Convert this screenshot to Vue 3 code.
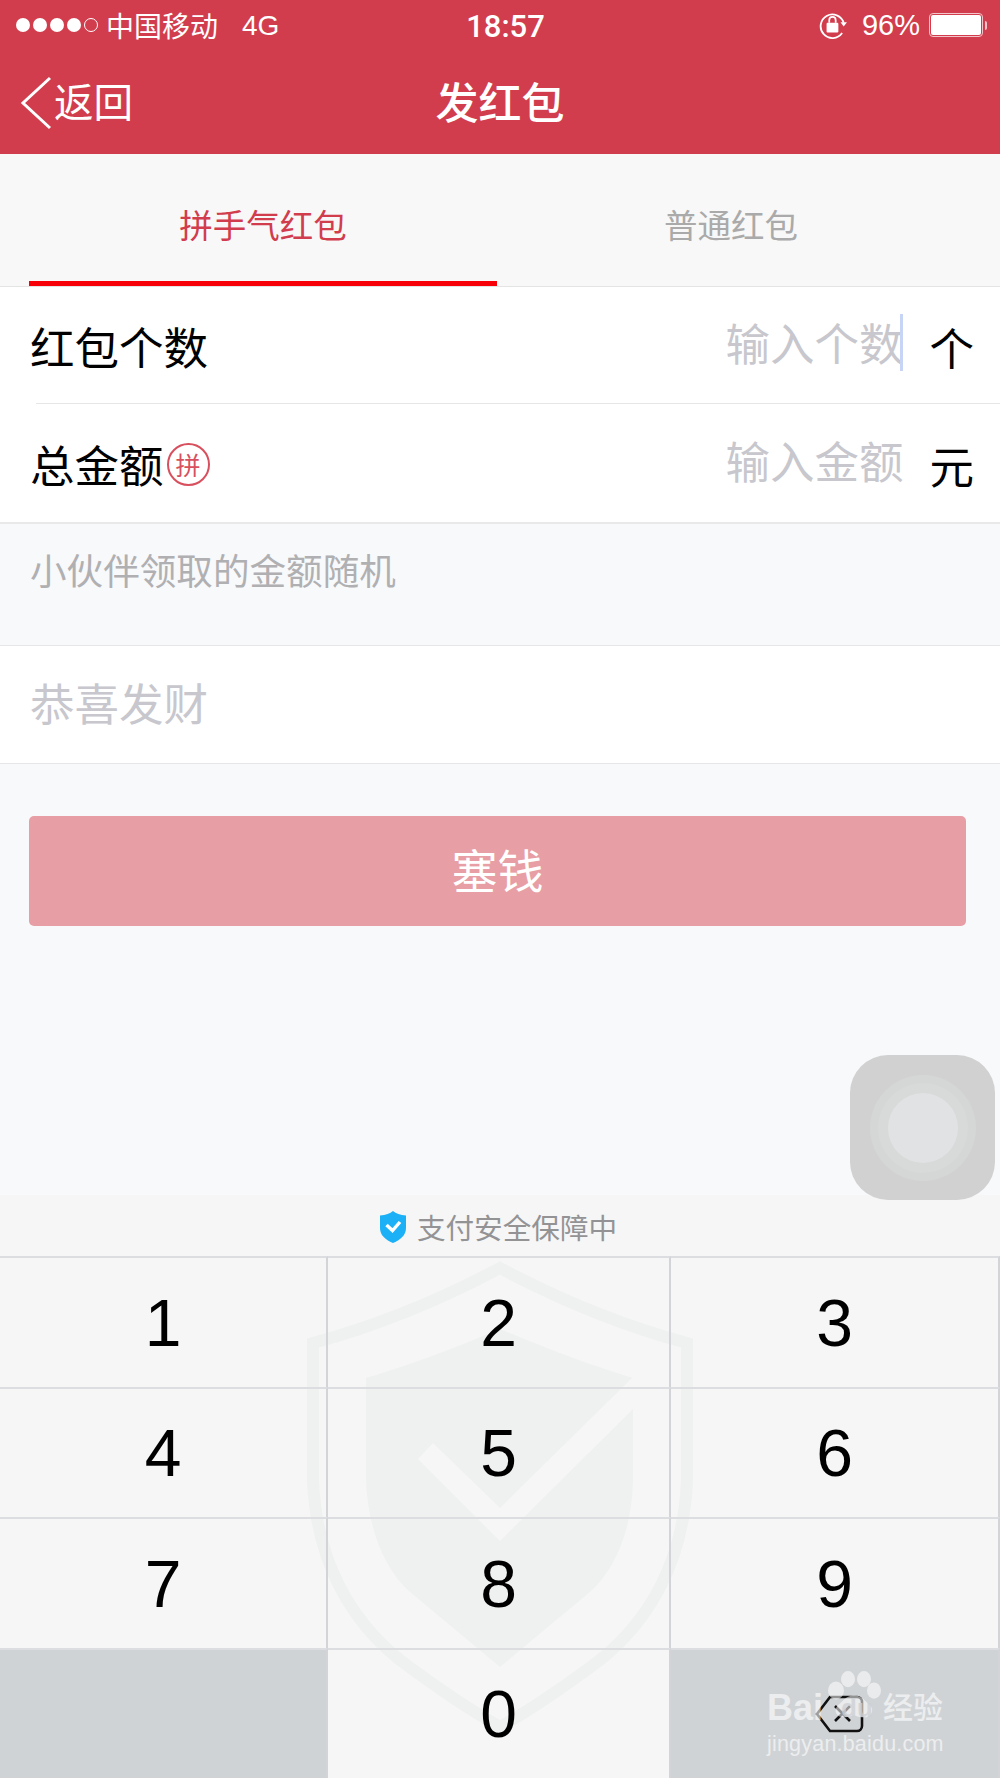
<template>
  <div class="phone">
    <header class="top">
      <div class="status">
        <div class="status-left">
          <span class="dots">
            <i v-for="n in 4" :key="n" class="dot"></i>
            <i class="dot empty"></i>
          </span>
          <span class="carrier">中国移动</span>
          <span class="net">4G</span>
        </div>
        <span class="time">18:57</span>
        <div class="status-right">
          <svg class="rotate" viewBox="0 0 28 26" width="30" height="28">
            <path d="M22.5 20.5A11 11 0 1 1 24 11" fill="none" stroke="#fff" stroke-width="1.7" />
            <path d="M21 10.500h6l-3 4z" fill="#fff" />
            <rect x="8" y="11" width="11" height="9" rx="1" fill="#fff" />
            <path d="M10.500 11V8.500a3 3 0 0 1 6 0V11" fill="none" stroke="#fff" stroke-width="1.600" />
          </svg>
          <span class="pct">96%</span>
          <span class="battery"><b></b></span>
          <span class="nub"></span>
        </div>
      </div>
      <nav class="nav">
        <div class="back">
          <svg viewBox="0 0 32 54" width="32" height="54">
            <path d="M30 2L3 27l27 25" fill="none" stroke="#fff" stroke-width="3" />
          </svg>
          <span>返回</span>
        </div>
        <h1>发红包</h1>
      </nav>
    </header>

    <div class="tabs">
      <div class="tab active">拼手气红包</div>
      <div class="tab">普通红包</div>
    </div>

    <section class="form">
      <div class="row first">
        <span class="label">红包个数</span>
        <span class="placeholder with-caret">输入个数</span>
        <span class="unit">个</span>
      </div>
      <div class="row">
        <span class="label">总金额</span>
        <span class="badge">拼</span>
        <span class="placeholder">输入金额</span>
        <span class="unit">元</span>
      </div>
    </section>

    <p class="hint">小伙伴领取的金额随机</p>
    <div class="message">恭喜发财</div>

    <div class="action">
      <button class="pay">塞钱</button>
    </div>

    <section class="keyboard">
      <div class="safe">
        <svg viewBox="0 0 26 32" width="26" height="32">
          <path d="M13 0c3 2.500 7 4 13 4.500V17c0 7-5 11.500-13 15C5 28.500 0 24 0 17V4.500C6 4 10 2.500 13 0z" fill="#1cb0f6" />
          <path d="M6.500 14l6 5.500L20 11" fill="none" stroke="#fff" stroke-width="3.400" />
        </svg>
        <span>支付安全保障中</span>
      </div>
      <div class="keypad">
        <svg class="guard" viewBox="0 1256 1000 522">
          <path d="M500 1268C440 1300 380 1325 313 1343V1480C316 1560 350 1620 400 1660C440 1690 470 1710 500 1727C530 1710 560 1690 600 1660C650 1620 684 1560 687 1480V1343C620 1325 560 1300 500 1268Z" fill="none" stroke="#eff0f0" stroke-width="12" />
          <path d="M500 1329C450 1350 410 1365 366 1378V1480C368 1530 385 1570 410 1592L500 1667L590 1592C615 1570 632 1530 633 1480V1378C590 1365 550 1350 500 1329Z" fill="#eff0f0" />
          <path d="M433 1443L500 1508L632 1378H640V1402L500 1541L418 1459Z" fill="#f6f6f6" />
        </svg>
        <div v-for="k in keys" :key="k.id" class="key" :class="{ muted: k.muted }">
          <span v-if="k.label">{{ k.label }}</span>
          <svg v-if="k.del" viewBox="0 0 50 40" width="50" height="40">
            <path d="M15 3H42a5 5 0 0 1 5 5V32a5 5 0 0 1-5 5H15L2 20Z" fill="none" stroke="#111" stroke-width="2.600" />
            <path d="M20 12l15 15M35 12L20 27" fill="none" stroke="#111" stroke-width="2.600" />
          </svg>
        </div>
      </div>
    </section>

    <div class="assist">
      <div class="ring outer"></div>
      <div class="ring mid"></div>
      <div class="ring inner"></div>
    </div>

    <div class="mark">
      <div class="mark-top">
        <span class="bai">Bai</span>
        <svg class="paw" viewBox="0 0 54 64" width="54" height="52" preserveAspectRatio="none">
          <ellipse cx="9" cy="24" rx="8" ry="11" />
          <ellipse cx="21" cy="10" rx="7" ry="10" />
          <ellipse cx="37" cy="10" rx="7" ry="10" />
          <ellipse cx="47" cy="24" rx="7" ry="10" />
          <path d="M27 30c8 0 11 7 16 12 5 6 1 16-7 15-5 0-6-2-9-2s-5 2-10 2c-8 0-11-9-6-15 5-5 8-12 16-12z" />
        </svg>
        <span class="du">du</span>
        <span class="jy">经验</span>
      </div>
      <div class="mark-url">jingyan.baidu.com</div>
    </div>
  </div>
</template>

<script setup>
const keys = [
  { id: "1", label: "1" },
  { id: "2", label: "2" },
  { id: "3", label: "3" },
  { id: "4", label: "4" },
  { id: "5", label: "5" },
  { id: "6", label: "6" },
  { id: "7", label: "7" },
  { id: "8", label: "8" },
  { id: "9", label: "9" },
  { id: "blank", muted: true },
  { id: "0", label: "0" },
  { id: "del", del: true, muted: true },
];
</script>

<style>
body {
  margin: 0;
}
</style>

<style scoped>
.phone {
  position: relative;
  width: 1000px;
  height: 1778px;
  overflow: hidden;
  display: flex;
  flex-direction: column;
  background: #f8f9fb;
  color: #000;
  font-family: "Liberation Sans", "Noto Sans CJK SC", sans-serif;
}

.top {
  height: 154px;
  background: #d13d4d;
  color: #fff;
  flex-shrink: 0;
}

.status {
  height: 50px;
  display: grid;
  grid-template-columns: 1fr auto 1fr;
  align-items: center;
  padding: 0 13px 0 16px;
}

.status-left {
  display: flex;
  align-items: center;
}

.dots {
  display: flex;
  gap: 3px;
  margin-right: 8px;
}

.dot {
  width: 14px;
  height: 14px;
  border-radius: 50%;
  background: #fff;
  box-sizing: border-box;
}

.dot.empty {
  background: none;
  border: 1.5px solid #fff;
}

.carrier {
  font-size: 28px;
}

.net {
  font-size: 28px;
  margin: 2px 0 0 24px;
}

.time {
  font-family: Roboto, "Liberation Sans", sans-serif;
  font-size: 31px;
  font-weight: 500;
  margin: 3px 0 0 8px;
}

.status-right {
  display: flex;
  align-items: center;
  justify-content: flex-end;
}

.pct {
  font-size: 29px;
  margin: 0 9px 0 14px;
}

.battery {
  box-sizing: border-box;
  width: 54px;
  height: 24px;
  border: 1.5px solid #f2c3c8;
  border-radius: 4px;
  padding: 1px;
  display: flex;
}

.battery b {
  flex: 1;
  background: #fff;
  border-radius: 2px;
}

.nub {
  width: 2px;
  height: 9px;
  margin-left: 2px;
  background: #f2c3c8;
  border-radius: 0 2px 2px 0;
}

.nav {
  position: relative;
  height: 104px;
  display: flex;
  align-items: center;
  justify-content: center;
}

.back {
  position: absolute;
  left: 20px;
  top: 26px;
  display: flex;
  align-items: center;
  gap: 2px;
  font-size: 39.500px;
}

.back span {
  margin-top: -8px;
}

.nav h1 {
  margin: -4px 0 0;
  font-size: 43px;
  font-weight: 500;
}

.tabs {
  height: 133px;
  flex-shrink: 0;
  box-sizing: border-box;
  padding: 0 29px;
  display: grid;
  grid-template-columns: 468px 1fr;
  background: #f8f8f8;
  border-bottom: 1px solid #e4e4e4;
}

.tab {
  display: flex;
  align-items: center;
  justify-content: center;
  padding-top: 6px;
  box-sizing: border-box;
  font-size: 33.500px;
  color: #aaa;
}

.tab:last-child {
  margin-left: -3px;
  margin-right: 3px;
}

.tab.active {
  color: #d13d4d;
  border-bottom: 5px solid #f70008;
  padding-top: 11px;
}

.form {
  background: #fff;
  border-bottom: 2px solid #e9e9ea;
  flex-shrink: 0;
}

.row {
  height: 118px;
  box-sizing: border-box;
  display: flex;
  align-items: center;
  padding: 0 26px 0 30px;
  font-size: 44.500px;
}

.row.first {
  height: 117px;
  border-bottom: 1px solid #e6e6e8;
  position: relative;
}

.row.first::after {
  content: "";
  position: absolute;
  left: 0;
  bottom: -1px;
  width: 36px;
  height: 1px;
  background: #fff;
}

.badge {
  box-sizing: border-box;
  width: 43px;
  height: 43px;
  margin: 2px 0 0 3px;
  border: 2px solid #d8505e;
  border-radius: 50%;
  color: #d8505e;
  font-size: 25px;
  display: flex;
  align-items: center;
  justify-content: center;
}

.placeholder {
  margin-left: auto;
  color: #c7c7cd;
  position: relative;
  top: -4px;
}

.with-caret::after {
  content: "";
  position: absolute;
  right: 0;
  top: 5px;
  width: 3px;
  height: 57px;
  background: #c8d4f5;
}

.unit {
  margin-left: 26px;
  position: relative;
  top: 1px;
}

.hint {
  margin: 0;
  height: 122px;
  flex-shrink: 0;
  box-sizing: border-box;
  padding: 24px 30px 0;
  font-size: 36.600px;
  line-height: 50px;
  color: #b0b0b2;
  border-bottom: 1px solid #e6e6e8;
}

.message {
  height: 118px;
  flex-shrink: 0;
  box-sizing: border-box;
  display: flex;
  align-items: center;
  padding: 0 30px 7px;
  background: #fff;
  font-size: 44.500px;
  color: #c7c7cd;
  border-bottom: 1px solid #e6e6e8;
}

.action {
  flex: 1;
  padding: 52px 34px 0 29px;
}

.pay {
  display: block;
  width: 100%;
  height: 110px;
  padding: 0 0 7px;
  border: 0;
  border-radius: 5px;
  background: #e79ea4;
  color: #fff;
  font-family: inherit;
  font-size: 46px;
}

.keyboard {
  flex-shrink: 0;
  background: #f6f6f6;
}

.safe {
  height: 59px;
  display: flex;
  align-items: center;
  justify-content: center;
  gap: 11px;
  font-size: 28.600px;
  color: #939395;
  padding: 2px 3px 0 0;
}

.keypad {
  position: relative;
  height: 522px;
  display: grid;
  grid-template-columns: 328px 343px 1fr;
  grid-template-rows: repeat(4, 1fr);
}

.guard {
  position: absolute;
  left: 0;
  top: 0;
  width: 1000px;
  height: 522px;
}

.key {
  position: relative;
  display: flex;
  align-items: center;
  justify-content: center;
  box-sizing: border-box;
  padding-top: 1px;
  border-top: 2px solid #dcdde0;
  border-right: 2px solid #d2d4d8;
  font-size: 66px;
  color: #000;
}

.key.muted {
  background: #d0d3d6;
}

.key svg {
  margin-top: 0;
  margin-left: 10px;
}

.assist {
  position: absolute;
  left: 850px;
  top: 1055px;
  width: 145px;
  height: 145px;
  border-radius: 38px;
  background: #d1d1d1;
}

.ring {
  position: absolute;
  left: 50%;
  top: 50%;
  border-radius: 50%;
  transform: translate(-50%, -50%);
}

.ring.outer {
  width: 106px;
  height: 106px;
  background: #d5d6d6;
}

.ring.mid {
  width: 90px;
  height: 90px;
  background: #d8d9d9;
}

.ring.inner {
  width: 70px;
  height: 70px;
  background: #e1e2e3;
}

.mark {
  position: absolute;
  left: 767px;
  top: 1670px;
  width: 190px;
  color: rgba(255, 255, 255, 0.62);
}

.mark-top {
  position: relative;
  height: 58px;
  display: flex;
  align-items: flex-end;
  font-size: 36px;
  font-weight: 700;
  line-height: 40px;
}

.paw {
  position: absolute;
  left: 60px;
  top: 1px;
  fill: rgba(255, 255, 255, 0.55);
}

.du {
  position: absolute;
  left: 74px;
  bottom: 0;
  font-size: 26px;
  color: rgba(205, 208, 211, 0.8);
}

.jy {
  position: absolute;
  left: 116px;
  bottom: 0;
  font-size: 30px;
  font-weight: 500;
}

.mark-url {
  margin-top: 3px;
  font-size: 21.500px;
  line-height: 26px;
  letter-spacing: 0.2px;
}
</style>
